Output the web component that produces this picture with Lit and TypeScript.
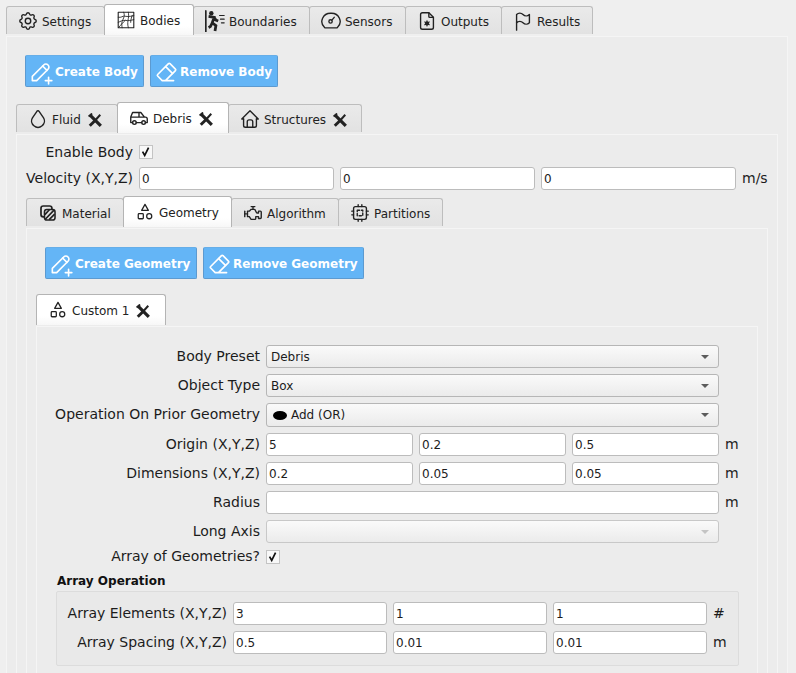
import { LitElement, html, css, svg } from "lit";
import { customElement } from "lit/decorators.js";

const ic = (body: unknown, sz = "i16") => html`<svg class="ic ${sz}" viewBox="0 0 24 24" fill="none" stroke="currentColor" stroke-width="1.5" stroke-linecap="round" stroke-linejoin="round">${body}</svg>`;

const icons: Record<string, unknown> = {
  settings: svg`<path d="M10.325 4.317c.426 -1.756 2.924 -1.756 3.35 0a1.724 1.724 0 0 0 2.573 1.066c1.543 -.94 3.31 .826 2.37 2.37a1.724 1.724 0 0 0 1.065 2.572c1.756 .426 1.756 2.924 0 3.35a1.724 1.724 0 0 0 -1.066 2.573c.94 1.543 -.826 3.31 -2.37 2.37a1.724 1.724 0 0 0 -2.572 1.065c-.426 1.756 -2.924 1.756 -3.35 0a1.724 1.724 0 0 0 -2.573 -1.066c-1.543 .94 -3.31 -.826 -2.37 -2.37a1.724 1.724 0 0 0 -1.065 -2.572c-1.756 -.426 -1.756 -2.924 0 -3.35a1.724 1.724 0 0 0 1.066 -2.573c-.94 -1.543 .826 -3.31 2.37 -2.37c1 .608 2.296 .07 2.572 -1.065z"/><circle cx="12" cy="12" r="3"/>`,
  mesh: svg`<g transform="translate(12 12) scale(.85) translate(-12 -12)"><rect x="2" y="2" width="20" height="20" stroke-width="1.4"/><path stroke-width="1.1" d="M2 8.5c4 1 6-2 8-1.5s6 1 12-.5M2 15c3-1 5-3 9-2.500s6 .5 11-1M3 21c3-3 4-5 8-8.500M9 2c1 3 1 4 .5 6s-2 4-2.500 6-.5 5 0 8M15 2c.5 3 .5 5 0 8s-1.500 7 0 12M20 6c-1 3-2 6-2 9"/></g>`,
  run: svg`<path stroke-width="1.8" d="M2 1v23"/><circle cx="8" cy="3.500" r="2.400" fill="currentColor" stroke="none"/><path stroke-width="3" stroke-linejoin="miter" stroke-linecap="butt" d="M5 7l6 1l-2 6l4 3l-1 6M9 14l-2 4l-2 1M11 8l2 3l2.500 1"/><path stroke-width="1.300" d="M17 6h5M18 10h4M19 14h3"/>`,
  gauge: svg`<path d="M12 3.500a9.500 9 0 0 1 7 15.500a2 2 0 0 1 -1 .5h-12a2 2 0 0 1 -1 -.5a9.500 9 0 0 1 7-15.500z"/><circle cx="11.500" cy="12.500" r="1.800"/><path d="M13 11l2.500-3"/>`,
  file: svg`<path d="M14 3v4a1 1 0 0 0 1 1h4"/><path d="M17 21h-10a2 2 0 0 1 -2 -2v-14a2 2 0 0 1 2 -2h7l5 5v11a2 2 0 0 1 -2 2z"/><path fill="currentColor" stroke="none" d="M12 10.500l1 2.200 2.400-.2-1.400 2 1.400 2-2.400-.2-1 2.200-1-2.200-2.400.2 1.400-2-1.400-2 2.400.2z"/>`,
  flag: svg`<path d="M5 5a5 5 0 0 1 7 0a5 5 0 0 0 7 0v9a5 5 0 0 1 -7 0a5 5 0 0 0 -7 0v-9z"/><path d="M5 22v-8"/>`,
  drop: svg`<path d="M7.502 19.423c2.602 2.105 6.395 2.105 8.996 0c2.602 -2.105 3.262 -5.708 1.566 -8.546l-4.89 -7.26c-.42 -.625 -1.287 -.803 -1.936 -.397a1.376 1.376 0 0 0 -.41 .397l-4.893 7.26c-1.695 2.838 -1.035 6.441 1.567 8.546z"/>`,
  car: svg`<circle cx="7" cy="17" r="2"/><circle cx="17" cy="17" r="2"/><path d="M5 17h-2v-6l2 -5h9l4 5h1a2 2 0 0 1 2 2v4h-2m-4 0h-6m-6 -6h15m-6 0v-5"/>`,
  home: svg`<path d="M5 12l-2 0l9 -9l9 9l-2 0"/><path d="M5 12v7a2 2 0 0 0 2 2h10a2 2 0 0 0 2 -2v-7"/><path d="M9 21v-6a2 2 0 0 1 2 -2h2a2 2 0 0 1 2 2v6"/>`,
  pencil: svg`<path d="M4 20h4l10.500 -10.500a2.828 2.828 0 1 0 -4 -4l-10.500 10.500v4"/><path d="M13.500 6.500l4 4"/><path d="M16 20h6"/><path d="M19 17v6"/>`,
  eraser: svg`<path d="M19 20h-10.500l-4.210 -4.300a1 1 0 0 1 0 -1.410l10 -10a1 1 0 0 1 1.410 0l5 5a1 1 0 0 1 0 1.410l-9.200 9.300"/><path d="M18 13.300l-6.300 -6.300"/>`,
  shapes: svg`<g transform="translate(12 12) scale(.92) translate(-12 -12)"><path d="M12 3l-4 7h8z"/><circle cx="17" cy="17" r="3"/><rect x="4" y="14" width="6" height="6" rx="1"/></g>`,
  material: svg`<g transform="translate(12 12) scale(.85) translate(-12 -12)"><rect x="3" y="3" width="14" height="14" rx="3" stroke-width="2.200"/><rect x="7.500" y="7.500" width="13.500" height="13.500" rx="3" fill="#e6e6e6" stroke-width="2"/><path stroke-width="2.200" stroke-linecap="butt" d="M8 14l6-6.500M8.500 20l11.500-12M13.500 20.500l7-7"/></g>`,
  engine: svg`<path d="M3 10v6"/><path d="M12 5v3"/><path d="M10 5h4"/><path d="M5 13h-2"/><path d="M6 10h2l2 -2h3.382a1 1 0 0 1 .894 .553l1.448 2.894a1 1 0 0 0 .894 .553h1.382v-2h2a1 1 0 0 1 1 1v6a1 1 0 0 1 -1 1h-2v-2h-3v2a1 1 0 0 1 -1 1h-3.465a1 1 0 0 1 -.832 -.445l-1.703 -2.555h-2v-6z"/>`,
  cpu: svg`<rect x="5" y="5" width="14" height="14" rx="2"/><path d="M9 9h6v6h-6z" stroke-dasharray="2.500 2"/><path d="M3 10h2M3 14h2M10 3v2M14 3v2M21 10h-2M21 14h-2M14 21v-2M10 21v-2"/>`,
  tools: svg`<path stroke-width="5.500" stroke-linecap="butt" d="M4 4L22 22"/><path stroke-width="5" stroke-linecap="butt" d="M3 22L14 11"/><path stroke-width="3.400" stroke-linecap="butt" d="M13 12L21 3"/><path stroke-width="3.400" stroke-linecap="butt" d="M1 6L7 1"/>`,
};

type Tab = { label: string; icon: string; w: number; active?: boolean; closable?: boolean };

const tabBar = (tabs: Tab[]) => html`<div class="tabbar">
  ${tabs.map(
    (t) => html`<div class="tab ${t.active ? "active" : ""}" style="width:${t.w}px">
      ${ic(icons[t.icon])}<span>${t.label}</span>${t.closable ? html`<span class="closer">${ic(icons.tools, "i14")}</span>` : ""}
    </div>`
  )}
</div>`;

const btn = (icon: string, label: string, w: number) => html`<div class="btn" style="width:${w}px">${ic(icons[icon], "i26")}<span>${label}</span></div>`;
const field = (v: string) => html`<input class="field" .value=${v} readonly />`;
const check = () => html`<div class="check"><svg viewBox="0 0 14 14" width="12" height="12" fill="none" stroke="#111" stroke-width="2"><path d="M3 6.500l2.500 4.500 4.500-9"/></svg></div>`;
const combo = (content: unknown, disabled = false) => html`<div class="combo wide ${disabled ? "disabled" : ""}"><span class="combo-text">${content}</span><span class="arrow"></span></div>`;
const label = (t: string) => html`<label class="lbl">${t}</label>`;
const triple = (name: string, a: string, b: string, c: string, unit: string) => html`${label(name)}${field(a)}${field(b)}${field(c)}<span class="unit">${unit}</span>`;

@customElement("app-root")
export class AppRoot extends LitElement {
  static styles = css`
    :host {
      display: block;
      width: 796px;
      height: 673px;
      overflow: hidden;
      background: #efefef;
      font-family: "DejaVu Sans", sans-serif;
      font-size: 14px;
      color: #1c1c1c;
    }
    .root { padding: 4px 8px 0 6px; }
    .tabbar { display: flex; align-items: flex-end; height: 31px; margin-bottom: 1px; }
    .tab {
      display: flex; align-items: center; gap: 6px; box-sizing: border-box; flex: none;
      height: 28px; margin-bottom: 1px; padding: 2px 0 0 13px;
      border: 1px solid #bdbdbd; border-bottom: none; margin-right: -1px;
      border-radius: 3px 3px 0 0;
      background: linear-gradient(#eaeaea, #e2e2e2);
      font-size: 12px; white-space: nowrap; color: #222;
    }
    .tab.active {
      height: 31px; margin-bottom: 0; padding-top: 1px; background: linear-gradient(#fff, #fff 70%, #f7f7f7);
      border-color: #b4b4b4; position: relative; z-index: 1;
    }
    .ic { flex: none; display: block; }
    .i14 { width: 14px; height: 14px; }
    .i16 { width: 22px; height: 22px; margin: -4px -3px -2px; }
    .i26 { width: 26px; height: 26px; }
    .closer { display: flex; margin-left: 1px; }
    .panel { border: 1px solid #f5f5f5; background: #ececec; }
    .p1 { padding: 18px 9px 0; }
    .p2 { padding: 10px 9px 0; }
    .p3 { padding: 18px 9px 0; }
    .p4 { padding: 18px 18px 40px; }
    .btns { display: flex; gap: 6px; margin: 0 0 15px 9px; height: 32px; }
    .btn {
      display: flex; align-items: center; gap: 1px; box-sizing: border-box; flex: none;
      padding: 1px 0 0 2px; border: 1px solid #5c9ad0; border-top-color: #66aee8; border-radius: 2px;
      background: #64b5f6; color: #fff; font-size: 12px; font-weight: 700; white-space: nowrap;
    }
    .head { display: grid; grid-template-columns: 107px 195px 195px 195px auto; column-gap: 6px; align-items: center; }
    .head .check { margin-bottom: 8px; }
    .head .lbl.en { margin-bottom: 8px; padding-bottom: 0; }
    .lbl { text-align: right; white-space: nowrap; line-height: 14px; padding-bottom: 2px; }
    .unit { white-space: nowrap; line-height: 14px; padding-bottom: 2px; }
    .field {
      box-sizing: border-box; width: 100%; height: 23px; min-width: 0; margin: 0; padding: 0 2px;
      border: 1px solid #bcbcbc; border-radius: 3px; background: #fff; outline: none;
      font: 12px "DejaVu Sans", sans-serif; color: #1c1c1c;
    }
    .check {
      box-sizing: border-box; width: 14px; height: 14px; border: 1px solid #c4c4c4; background: #f8f8f8;
      display: flex; align-items: center; justify-content: center;
    }
    .p3-tabs { margin-top: 6px; }
    .form { display: grid; grid-template-columns: 205px 147px 147px 147px 14px; column-gap: 6px; row-gap: 6px; align-items: center; }
    .combo {
      box-sizing: border-box; height: 23px; display: flex; align-items: center; justify-content: space-between;
      padding: 0 9px 0 4px; border: 1px solid #b6b6b6; border-radius: 3px;
      background: linear-gradient(#fafafa, #ebebeb); font-size: 12px;
    }
    .wide { grid-column: 2 / 5; }
    .tall { height: 24px; }
    .combo.disabled { border-color: #c8c8c8; }
    .combo-text { display: flex; align-items: center; gap: 4px; }
    .blob { width: 14px; height: 9px; margin-left: 2px; border-radius: 50%; background: #000; }
    .arrow { width: 0; height: 0; border-left: 4px solid transparent; border-right: 4px solid transparent; border-top: 4px solid #5c5c5c; }
    .disabled .arrow { border-top-color: #c4c4c4; }
    .span3 { grid-column: 2 / 5; }
    .check-cell { grid-column: 2 / 6; }
    .gtitle { font-size: 12px; font-weight: 700; color: #111; margin: 9px 0 3px 2px; line-height: 14px; }
    .group {
      margin-left: 1px; box-sizing: border-box; width: 683px;
      padding: 10px 12px 11px 9px; border: 1px solid #dcdcdc; border-radius: 2px; background: #e9e9e9;
      display: grid; grid-template-columns: 161px 154px 154px 154px 13px; column-gap: 6px; row-gap: 6px; align-items: center;
    }
  `;

  render() {
    return html`<div class="root">
      ${tabBar([
        { label: "Settings", icon: "settings", w: 99 },
        { label: "Bodies", icon: "mesh", active: true, w: 90 },
        { label: "Boundaries", icon: "run", w: 117 },
        { label: "Sensors", icon: "gauge", w: 97 },
        { label: "Outputs", icon: "file", w: 97 },
        { label: "Results", icon: "flag", w: 92 },
      ])}
      <div class="panel p1">
        <div class="btns">${btn("pencil", "Create Body", 119)}${btn("eraser", "Remove Body", 128)}</div>
        ${tabBar([
          { label: "Fluid", icon: "drop", closable: true, w: 102 },
          { label: "Debris", icon: "car", active: true, closable: true, w: 112 },
          { label: "Structures", icon: "home", closable: true, w: 134 },
        ])}
        <div class="panel p2">
          <div class="head">
            <label class="lbl en">Enable Body</label>
            ${check()}<span></span><span></span><span></span>
            ${label("Velocity (X,Y,Z)")}${field("0")}${field("0")}${field("0")}<span class="unit">m/s</span>
          </div>
          <div class="p3-tabs">
            ${tabBar([
              { label: "Material", icon: "material", w: 98 },
              { label: "Geometry", icon: "shapes", active: true, w: 109 },
              { label: "Algorithm", icon: "engine", w: 108 },
              { label: "Partitions", icon: "cpu", w: 105 },
            ])}
          </div>
          <div class="panel p3">
            <div class="btns">${btn("pencil", "Create Geometry", 152)}${btn("eraser", "Remove Geometry", 161)}</div>
            ${tabBar([{ label: "Custom 1", icon: "shapes", active: true, closable: true, w: 130 }])}
            <div class="panel p4">
              <div class="form">
                ${label("Body Preset")}${combo("Debris")}<span></span>
                ${label("Object Type")}${combo("Box")}<span></span>
                ${label("Operation On Prior Geometry")}<div class="combo wide tall"><span class="combo-text"><span class="blob"></span>Add (OR)</span><span class="arrow"></span></div><span></span>
                ${triple("Origin (X,Y,Z)", "5", "0.2", "0.5", "m")}
                ${triple("Dimensions (X,Y,Z)", "0.2", "0.05", "0.05", "m")}
                ${label("Radius")}<div class="span3">${field("")}</div><span class="unit">m</span>
                ${label("Long Axis")}${combo("", true)}<span></span>
                ${label("Array of Geometries?")}<div class="check-cell">${check()}</div>
              </div>
              <div class="gtitle">Array Operation</div>
              <div class="group">
                ${triple("Array Elements (X,Y,Z)", "3", "1", "1", "#")}
                ${triple("Array Spacing (X,Y,Z)", "0.5", "0.01", "0.01", "m")}
              </div>
            </div>
          </div>
        </div>
      </div>
    </div>`;
  }
}
